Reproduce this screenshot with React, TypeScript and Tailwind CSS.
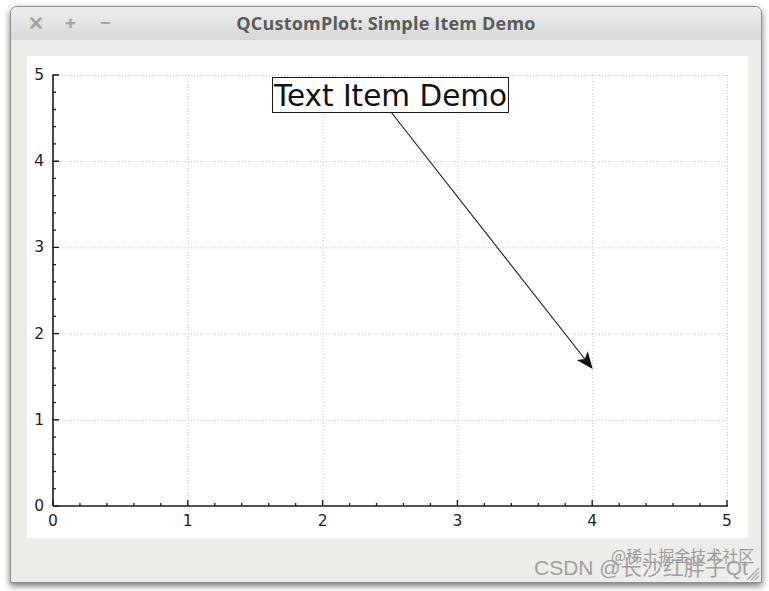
import React from "react";

const X0 = 26;
const Y0 = 450;
const UX = 134.8;
const UY = 86.2;

const px = (v: number) => X0 + v * UX;
const py = (v: number) => Y0 - v * UY;

function Plot() {
  const majors = [0, 1, 2, 3, 4, 5];
  const subs: number[] = [];
  for (let i = 0; i < 5; i++) {
    for (let j = 1; j < 5; j++) subs.push(i + j * 0.2);
  }

  // arrow from text box to (4, 1.6)
  const sx = 364;
  const sy = 56;
  const ex = px(4) + 0.5;
  const ey = 313;
  const ang = Math.atan2(ey - sy, ex - sx);
  const len = 17;
  const half = 7;
  const bx = ex - len * Math.cos(ang);
  const by = ey - len * Math.sin(ang);
  const ix = ex - len * 0.75 * Math.cos(ang);
  const iy = ey - len * 0.75 * Math.sin(ang);
  const nx = -Math.sin(ang);
  const ny = Math.cos(ang);
  const head = `${ex},${ey} ${bx + nx * half},${by + ny * half} ${ix},${iy} ${bx - nx * half},${by - ny * half}`;

  return (
    <svg width={721} height={482} className="block">
      {/* grid */}
      {majors.slice(1).map((v) => (
        <line
          key={"gx" + v}
          x1={px(v) + 0.5}
          y1={py(5)}
          x2={px(v) + 0.5}
          y2={Y0}
          stroke="#c4c4c4"
          strokeDasharray="1 2"
        />
      ))}
      {majors.slice(1).map((v) => (
        <line
          key={"gy" + v}
          x1={X0}
          y1={py(v) + 0.5}
          x2={px(5)}
          y2={py(v) + 0.5}
          stroke="#c4c4c4"
          strokeDasharray="1 2"
        />
      ))}

      {/* axes */}
      <line x1={X0} y1={Y0} x2={px(5) + 1} y2={Y0} stroke="#1a1a1a" strokeWidth={1.6} />
      <line x1={X0} y1={Y0} x2={X0} y2={py(5) - 0.5} stroke="#1a1a1a" strokeWidth={1.6} />

      {majors.map((v) => (
        <g key={"t" + v}>
          <line x1={px(v)} y1={Y0} x2={px(v)} y2={Y0 - 6} stroke="#1a1a1a" strokeWidth={1.4} />
          <line x1={X0} y1={py(v)} x2={X0 + 6} y2={py(v)} stroke="#1a1a1a" strokeWidth={1.4} />
        </g>
      ))}
      {subs.map((v) => (
        <g key={"s" + v}>
          <line x1={px(v)} y1={Y0} x2={px(v)} y2={Y0 - 3} stroke="#1a1a1a" strokeWidth={1.3} />
          <line x1={X0} y1={py(v)} x2={X0 + 3} y2={py(v)} stroke="#1a1a1a" strokeWidth={1.3} />
        </g>
      ))}

      {/* labels */}
      <g fontFamily="'DejaVu Sans', sans-serif" fontSize={15.5} fill="#1f1f1f">
        {majors.map((v) => (
          <text key={"lx" + v} x={px(v)} y={Y0 + 20} textAnchor="middle">
            {v}
          </text>
        ))}
        {majors.map((v) => (
          <text key={"ly" + v} x={X0 - 9} y={py(v) + 5} textAnchor="end">
            {v}
          </text>
        ))}
      </g>

      {/* text item */}
      <rect x={245.5} y={21.5} width={236} height={35} fill="white" stroke="#1a1a1a" strokeWidth={1} />
      <text
        x={363.5}
        y={49.5}
        textAnchor="middle"
        fontFamily="'DejaVu Sans', sans-serif"
        fontSize={29.5}
        fill="#111"
      >
        Text Item Demo
      </text>

      {/* arrow */}
      <line x1={sx} y1={sy} x2={ix} y2={iy} stroke="#1a1a1a" strokeWidth={1.1} />
      <polygon points={head} fill="#111" />
    </svg>
  );
}

export default function App() {
  return (
    <div className="relative h-[591px] w-[769px] overflow-hidden bg-white pl-[10px] pt-[6px]">
      <div className="flex h-[577px] w-[752px] flex-col overflow-hidden rounded-t-[7px] border border-[#8f8f8f] bg-[#efedea] shadow-[0_3px_7px_rgba(0,0,0,0.55)]">
        <div className="flex h-[33px] shrink-0 items-center bg-gradient-to-b from-[#eeeeee] to-[#d8d8d8] font-['Open_Sans',sans-serif]">
          <div className="flex w-[130px] items-center pl-[7px] text-[19px] font-bold leading-none text-[#a3a3a3]">
            <span className="w-[35px] text-center">✕</span>
            <span className="w-[35px] text-center">+</span>
            <span className="w-[35px] text-center">−</span>
          </div>
          <div className="flex-1 text-center text-[18px] font-bold tracking-[0.2px] text-[#5b5b5b]">
            QCustomPlot: Simple Item Demo
          </div>
          <div className="w-[130px]" />
        </div>
        <div className="flex-1 pl-[16px] pt-[16px]">
          <div className="h-[482px] w-[721px] bg-white">
            <Plot />
          </div>
        </div>
      </div>

      {/* watermark */}
      <div className="absolute left-[611px] top-[547px] font-['Noto_Sans_CJK_SC',sans-serif] text-[16px] leading-none text-[#9b9b9b]">
        @稀土掘金技术社区
      </div>
      <div className="absolute left-[534px] top-[557px] font-['Liberation_Sans','Noto_Sans_CJK_SC',sans-serif] text-[21px] leading-none text-[#a0a0a0]">
        CSDN @长沙红胖子Qt
      </div>
      <svg className="absolute left-[744px] top-[565px]" width={16} height={16}>
        <line x1={3} y1={15} x2={15} y2={3} stroke="#a9a9a9" strokeWidth={1.3} />
        <line x1={7} y1={15} x2={15} y2={7} stroke="#a9a9a9" strokeWidth={1.3} />
        <line x1={11} y1={15} x2={15} y2={11} stroke="#a9a9a9" strokeWidth={1.3} />
      </svg>
    </div>
  );
}
